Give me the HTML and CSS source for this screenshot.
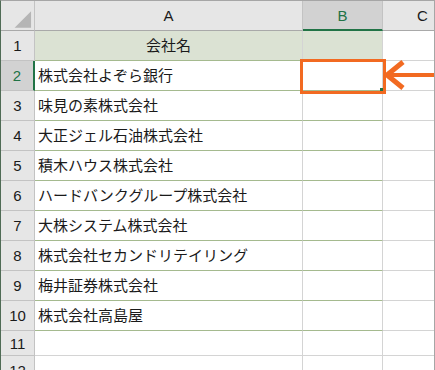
FILE: index.html
```html
<!DOCTYPE html>
<html lang="ja">
  <head>
    <meta charset="utf-8">
    <title>会社名</title>
    <link rel="stylesheet" href="styles.css">
  </head>
  <body>
    <div class="sheet">
      <div class="grid">
        <!-- column headers -->
        <div class="corner">
          <svg width="34" height="29" viewBox="0 0 34 29"><polygon points="14,27 31,27 31,10" fill="#b5b5b5"/></svg>
        </div>
        <div class="colhead">A</div>
        <div class="colhead active">B</div>
        <div class="colhead">C</div>

        <div class="rowhead">1</div>
        <div class="cell title green">会社名</div>
        <div class="cell title green"></div>
        <div class="cell"></div>

        <div class="rowhead active">2</div>
        <div class="cell green">株式会社よぞら銀行</div>
        <div class="cell green"></div>
        <div class="cell"></div>

        <div class="rowhead">3</div>
        <div class="cell green">味見の素株式会社</div>
        <div class="cell green"></div>
        <div class="cell"></div>

        <div class="rowhead">4</div>
        <div class="cell green">大正ジェル石油株式会社</div>
        <div class="cell green"></div>
        <div class="cell"></div>

        <div class="rowhead">5</div>
        <div class="cell green">積木ハウス株式会社</div>
        <div class="cell green"></div>
        <div class="cell"></div>

        <div class="rowhead">6</div>
        <div class="cell green">ハードバンクグループ株式会社</div>
        <div class="cell green"></div>
        <div class="cell"></div>

        <div class="rowhead">7</div>
        <div class="cell green">大株システム株式会社</div>
        <div class="cell green"></div>
        <div class="cell"></div>

        <div class="rowhead">8</div>
        <div class="cell green">株式会社セカンドリテイリング</div>
        <div class="cell green"></div>
        <div class="cell"></div>

        <div class="rowhead">9</div>
        <div class="cell green">梅井証券株式会社</div>
        <div class="cell green"></div>
        <div class="cell"></div>

        <div class="rowhead">10</div>
        <div class="cell green">株式会社高島屋</div>
        <div class="cell green"></div>
        <div class="cell"></div>

        <div class="rowhead">11</div>
        <div class="cell"></div>
        <div class="cell"></div>
        <div class="cell"></div>

        <div class="rowhead">12</div>
        <div class="cell"></div>
        <div class="cell"></div>
        <div class="cell"></div>
      </div>

      <!-- selected cell B2 and pointer -->
      <div class="pick"><span class="handle"></span></div>
      <svg class="arrow" width="52" height="32" viewBox="0 0 52 32">
        <polyline points="20,2 4,15 20,28" fill="none" stroke="#f26a21" stroke-width="5"/>
        <line x1="6" y1="15" x2="52" y2="15" stroke="#f26a21" stroke-width="4"/>
      </svg>
    </div>
  </body>
</html>
```

FILE: styles.css
```css
* {
  margin: 0;
  padding: 0;
  box-sizing: border-box; }

body {
  background: white;
  font-family: "Liberation Sans", "Noto Sans CJK JP", sans-serif;
  color: #1a1a1a; }

.sheet {
  position: relative;
  width: 435px;
  height: 370px;
  overflow: hidden;
  border-left: 1px solid #4f6b55;
  border-top: 1px solid #a6a6a6;
  border-right: 1px solid #a6a6a6; }

.grid {
  display: grid;
  grid-template-columns: 34px 268px 80px 80px;
  grid-template-rows: 30px repeat(10, 30px) 25px 30px; }

.corner, .colhead, .rowhead {
  background: #e6e6e6;
  border-right: 1px solid #c3c3c3;
  border-bottom: 1px solid #c3c3c3;
  font-size: 15px;
  display: flex;
  align-items: center;
  justify-content: center; }

.corner, .colhead {
  border-bottom-color: #a9a9a9; }

.colhead.active {
  background: #d2d2d2;
  color: #217346;
  border-bottom: 2px solid #217346; }

.rowhead.active {
  background: #d2d2d2;
  color: #217346;
  border-right: 2px solid #217346; }

.cell {
  border-right: 1px solid #d4d4d4;
  border-bottom: 1px solid #d4d4d4;
  font-family: "Noto Sans CJK JP", sans-serif;
  font-size: 15px;
  padding: 0 0 2px 3px;
  display: flex;
  align-items: center;
  white-space: nowrap; }
  .cell.green {
    border-bottom-color: #a5ba8f; }
  .cell.title {
    background: #dbe2d3;
    justify-content: center;
    padding-left: 0; }

.pick {
  position: absolute;
  left: 299px;
  top: 58px;
  width: 86px;
  height: 35px;
  border: 3px solid #f26a21; }
  .pick .handle {
    position: absolute;
    right: 0;
    bottom: 0;
    width: 3px;
    height: 3px;
    background: #217346; }

.arrow {
  position: absolute;
  left: 382px;
  top: 59px; }
```
